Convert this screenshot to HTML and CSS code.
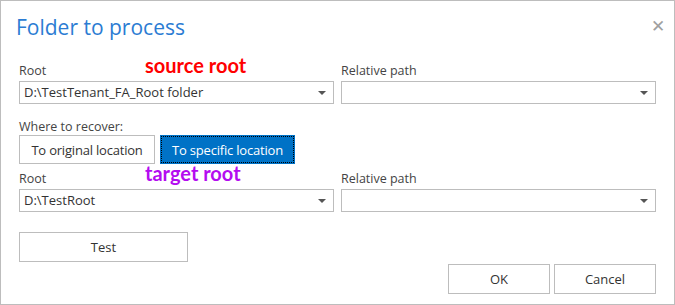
FILE: index.html
```html
<!DOCTYPE html>
<html lang="en">
<head>
  <meta charset="UTF-8" />
  <title>Folder to process</title>
  <link rel="stylesheet" href="styles.css">
</head>
<body>
  <div class="dialog">
    <div class="header">
      <h1>Folder to process</h1>
      <span class="close">&#x2715;</span>
    </div>

    <!-- Source -->
    <div class="row">
      <div class="field">
        <div class="label">Root <span class="note red">source root</span></div>
        <div class="select">D:\TestTenant_FA_Root folder<span class="arrow"></span></div>
      </div>
      <div class="field">
        <div class="label">Relative path</div>
        <div class="select"><span class="arrow"></span></div>
      </div>
    </div>

    <!-- Where to recover -->
    <div class="recover">
      <div class="label">Where to recover:</div>
      <div class="toggle">
        <button class="btn">To original location</button>
        <button class="btn active">To specific location</button>
      </div>
    </div>

    <!-- Target -->
    <div class="row">
      <div class="field">
        <div class="label">Root <span class="note purple">target root</span></div>
        <div class="select">D:\TestRoot<span class="arrow"></span></div>
      </div>
      <div class="field">
        <div class="label">Relative path</div>
        <div class="select"><span class="arrow"></span></div>
      </div>
    </div>

    <div class="footer">
      <button class="btn test">Test</button>
      <div class="actions">
        <button class="btn wide">OK</button>
        <button class="btn wide">Cancel</button>
      </div>
    </div>
  </div>
</body>
</html>
```

FILE: styles.css
```css
* {
  box-sizing: border-box;
}

body {
  margin: 0;
  font-family: "Open Sans", "Noto Sans", sans-serif;
  color: #333;
  background: white;
}

.dialog {
  width: 675px;
  height: 305px;
  border: 1px solid #bdbdbd;
  padding: 0 18px 0 18px;
}

.header {
  display: flex;
  justify-content: space-between;
  align-items: flex-start;
  height: 61px;
}

h1 {
  margin: 12px 0 0 -3px;
  font-size: 21px;
  font-weight: normal;
  color: #2b7cd3;
}

.close {
  color: #a0a0a0;
  font-size: 17px;
  margin: 13px -9px 0 0;
}

.row {
  display: flex;
  gap: 7px;
}

.field {
  width: 315px;
}

.label {
  font-size: 12.5px;
  color: #444;
  height: 19px;
  line-height: 18px;
  position: relative;
}

.note {
  position: absolute;
  left: 126px;
  top: -6px;
  font-family: Lato, sans-serif;
  font-weight: bold;
  font-size: 20px;
}

.red {
  color: #ff0000;
}

.purple {
  color: #b40cf0;
}

.select {
  position: relative;
  height: 23px;
  border: 1px solid #bdbdbd;
  font-size: 13px;
  line-height: 20px;
  padding-left: 4px;
  color: #333;
}

.arrow {
  position: absolute;
  right: 7px;
  top: 9px;
  border-left: 4px solid transparent;
  border-right: 4px solid transparent;
  border-top: 4px solid #555;
}

.recover {
  margin-top: 14px;
  margin-bottom: 6px;
}

.recover .label {
  height: 17px;
}

.toggle {
  display: flex;
  gap: 5px;
}

.btn {
  font-family: "Open Sans", "Noto Sans", sans-serif;
  font-size: 13px;
  color: #333;
  background: white;
  border: 1px solid #bdbdbd;
  height: 29px;
  padding: 0 10px;
}

.toggle .btn {
  width: 136px;
  padding: 0;
  letter-spacing: -0.2px;
}

.btn.active {
  background: #0072c6;
  color: white;
  border-color: #0072c6;
  outline: 1px dotted #000;
  outline-offset: -2px;
  width: 135px;
}

.footer {
  display: flex;
  justify-content: space-between;
  margin-top: 20px;
}

.test {
  width: 169px;
  height: 30px;
}

.actions {
  display: flex;
  gap: 4px;
  margin-top: 32px;
}

.wide {
  width: 102px;
  height: 30px;
}
```
